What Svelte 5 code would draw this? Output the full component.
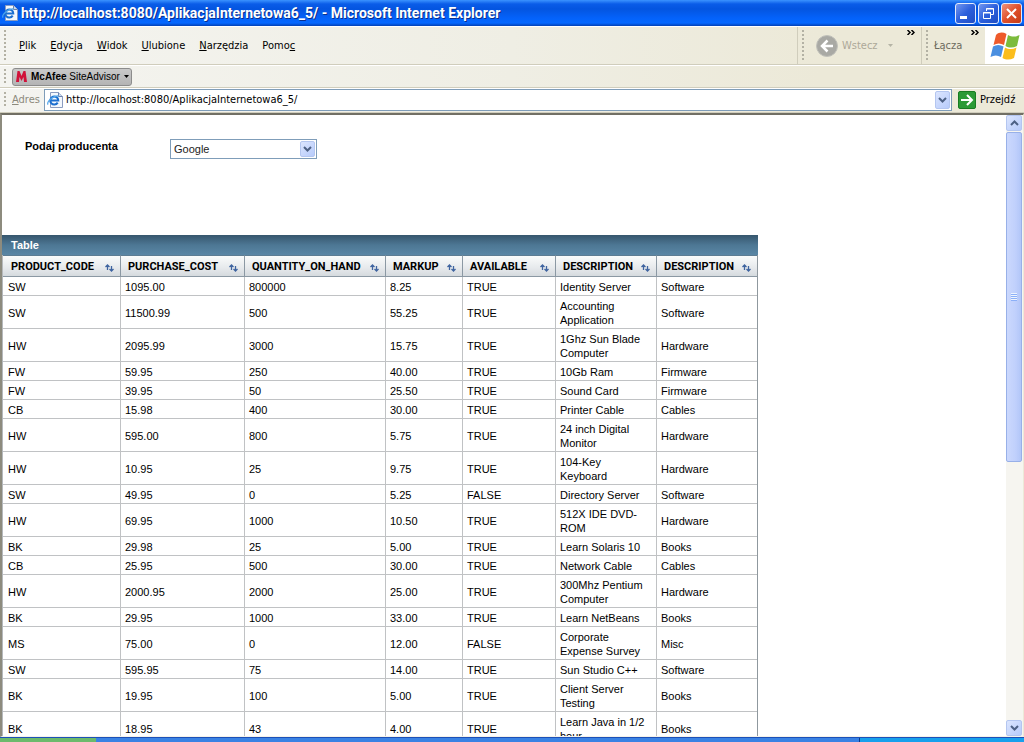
<script>
	const menu = [
		["", "P", "lik"],
		["", "E", "dycja"],
		["", "W", "idok"],
		["", "U", "lubione"],
		["", "N", "arzędzia"],
		["Pomo", "c", ""]
	]

	const columns = [
		{ name: "PRODUCT_CODE", width: 118 },
		{ name: "PURCHASE_COST", width: 124 },
		{ name: "QUANTITY_ON_HAND", width: 141 },
		{ name: "MARKUP", width: 77 },
		{ name: "AVAILABLE", width: 93 },
		{ name: "DESCRIPTION", width: 101 },
		{ name: "DESCRIPTION", width: 100 }
	]

	const rows = [
		["SW", "1095.00", "800000", "8.25", "TRUE", "Identity Server", "Software"],
		["SW", "11500.99", "500", "55.25", "TRUE", "Accounting Application", "Software"],
		["HW", "2095.99", "3000", "15.75", "TRUE", "1Ghz Sun Blade Computer", "Hardware"],
		["FW", "59.95", "250", "40.00", "TRUE", "10Gb Ram", "Firmware"],
		["FW", "39.95", "50", "25.50", "TRUE", "Sound Card", "Firmware"],
		["CB", "15.98", "400", "30.00", "TRUE", "Printer Cable", "Cables"],
		["HW", "595.00", "800", "5.75", "TRUE", "24 inch Digital Monitor", "Hardware"],
		["HW", "10.95", "25", "9.75", "TRUE", "104-Key Keyboard", "Hardware"],
		["SW", "49.95", "0", "5.25", "FALSE", "Directory Server", "Software"],
		["HW", "69.95", "1000", "10.50", "TRUE", "512X IDE DVD-ROM", "Hardware"],
		["BK", "29.98", "25", "5.00", "TRUE", "Learn Solaris 10", "Books"],
		["CB", "25.95", "500", "30.00", "TRUE", "Network Cable", "Cables"],
		["HW", "2000.95", "2000", "25.00", "TRUE", "300Mhz Pentium Computer", "Hardware"],
		["BK", "29.95", "1000", "33.00", "TRUE", "Learn NetBeans", "Books"],
		["MS", "75.00", "0", "12.00", "FALSE", "Corporate Expense Survey", "Misc"],
		["SW", "595.95", "75", "14.00", "TRUE", "Sun Studio C++", "Software"],
		["BK", "19.95", "100", "5.00", "TRUE", "Client Server Testing", "Books"],
		["BK", "18.95", "43", "4.00", "TRUE", "Learn Java in 1/2 hour", "Books"]
	]

	let url = "http://localhost:8080/AplikacjaInternetowa6_5/"
	let producer = "Google"
</script>

{#snippet pageIcon()}
	<svg class="page-icon" viewBox="0 0 16 16" aria-hidden="true">
		<path d="M3.5 .5h8l4 4v11h-12z" fill="#f4f8fd" stroke="#8b9cc0" />
		<path d="M11.5 .5v4h4" fill="#cbd9ee" stroke="#6d82ad" />
		<path d="M10.7 10.6a4 4 0 1 1 .6-2.2H4" fill="none" stroke="#1c6fd0" stroke-width="2" />
		<path d="M1 12.6C-.6 9.5 7 3 11.8 4" fill="none" stroke="#4fa5ea" stroke-width="1.2" />
	</svg>
{/snippet}

{#snippet chevron(down)}
	<svg class="chevron" viewBox="0 0 9 6" aria-hidden="true">
		<path d={down ? "M1 1l3.5 3.5L8 1" : "M1 5l3.5-3.5L8 5"} fill="none" stroke="#4d6185" stroke-width="2" />
	</svg>
{/snippet}

{#snippet more()}
	<svg class="more" viewBox="0 0 8 5" aria-hidden="true">
		<path d="M.5 0L3 2.5.5 5M4.5 0L7 2.5 4.5 5" fill="none" stroke="#000" stroke-width="1.5" />
	</svg>
{/snippet}

<div class="window">
	<header class="titlebar">
		{@render pageIcon()}
		<h1>{url} - Microsoft Internet Explorer</h1>
		<div class="caption-buttons">
			<button aria-label="Minimalizuj">
				<svg viewBox="0 0 19 19"><path d="M4 12h7v3H4z" fill="#fff" /></svg>
			</button>
			<button aria-label="Przywróć">
				<svg viewBox="0 0 19 19">
					<path d="M7.5 7V4.5h7v6H12M7 5h8M4.5 8.5h7v6h-7zM4 9h8" fill="none" stroke="#fff" />
				</svg>
			</button>
			<button class="close" aria-label="Zamknij">
				<svg viewBox="0 0 19 19"><path d="M5 5l9 9M14 5l-9 9" stroke="#fff" stroke-width="2" /></svg>
			</button>
		</div>
	</header>

	<div class="bar menubar">
		<span class="grip"></span>
		<nav>
			{#each menu as [before, key, after]}
				<button>{before}<u>{key}</u>{after}</button>
			{/each}
		</nav>
		<div class="band back">
			<span class="grip"></span>
			<button disabled>
				<svg class="back-icon" viewBox="0 0 22 22" aria-hidden="true">
					<circle cx="11" cy="11" r="10.5" fill="#a9a9a4" stroke="#c0c0ba" />
					<path d="M11.5 5.5L6 11l5.5 5.5M6.5 11H17" fill="none" stroke="#fff" stroke-width="2.5" />
				</svg>
				Wstecz
				<svg class="arrow" viewBox="0 0 5 3" aria-hidden="true"><path d="M0 0h5L2.5 3z" fill="#b5b4a6" /></svg>
			</button>
			{@render more()}
		</div>
		<div class="band links">
			<span class="grip"></span>
			<span>Łącza</span>
			{@render more()}
		</div>
		<div class="flag">
			<svg viewBox="0 0 30 28" aria-hidden="true">
				<path d="M6 3C9 0 13 0 16.5 2L14 13C10.5 11 7 11 3.5 13z" fill="#ee5a2a" />
				<path d="M18 3c4 2 7.5 2 11.5 0L27 14c-4 2-8 2-11.5 0z" fill="#7cbb3c" />
				<path d="M3 14.5c3.5-2 7-2 10.5 0L11 25C7.5 23 4 23 .5 25z" fill="#4a8fe0" />
				<path d="M15 15.5c4 2 7.5 2 11.5 0L24 26c-4 2-8 2-11.5 0z" fill="#fbbd1c" />
			</svg>
		</div>
	</div>

	<div class="bar advisor">
		<span class="grip"></span>
		<button>
			<svg class="mcafee" viewBox="0 0 11 11" aria-hidden="true">
				<path d="M0 11L1.5 0H3.5L5.5 5 7.5 0H9.5L11 11H8L7.5 6 5.5 10 3.5 6 3 11z" fill="#d0123a" />
			</svg>
			<span><b>McAfee</b> SiteAdvisor</span>
			<svg class="arrow" viewBox="0 0 5 3" aria-hidden="true"><path d="M0 0h5L2.5 3z" fill="#000" /></svg>
		</button>
	</div>

	<div class="bar address">
		<span class="grip"></span>
		<label for="address"><u>A</u>dres</label>
		<div class="combo">
			{@render pageIcon()}
			<input id="address" type="text" bind:value={url}>
			<button class="blue" aria-label="Historia adresów">{@render chevron(true)}</button>
		</div>
		<button class="go">
			<svg viewBox="0 0 18 18" aria-hidden="true">
				<rect x=".5" y=".5" width="17" height="17" rx="1.5" fill="#2b9a36" stroke="#187c22" />
				<path d="M3 9h10M9 4l5 5-5 5" fill="none" stroke="#fff" stroke-width="2" />
			</svg>
			Przejdź
		</button>
	</div>

	<div class="view">
		<main>
			<form>
				<label for="producer">Podaj producenta</label>
				<div class="select">
					<select id="producer" bind:value={producer}>
						<option>Google</option>
					</select>
					<span class="blue">{@render chevron(true)}</span>
				</div>
			</form>

			<table>
				<caption>Table</caption>
				<colgroup>
					{#each columns as column}
						<col style="width: {column.width}px">
					{/each}
				</colgroup>
				<thead>
					<tr>
						{#each columns as column}
							<th>
								<div>
									<span>{column.name}</span>
									<button aria-label="Sort">
										<svg viewBox="0 0 9 8" aria-hidden="true">
											<path d="M2.5 6V1M.5 3l2-2 2 2M6.5 2v5M4.5 5l2 2 2-2" fill="none" stroke="#3f64a0" stroke-width="1.3" />
										</svg>
									</button>
								</div>
							</th>
						{/each}
					</tr>
				</thead>
				<tbody>
					{#each rows as row}
						<tr>
							{#each row as cell}
								<td>{cell}</td>
							{/each}
						</tr>
					{/each}
				</tbody>
			</table>
		</main>

		<div class="scrollbar">
			<button class="blue" aria-label="Przewiń w górę">{@render chevron(false)}</button>
			<div class="thumb"><span></span></div>
			<div class="track"></div>
			<button class="blue" aria-label="Przewiń w dół">{@render chevron(true)}</button>
		</div>
	</div>

	<footer class="taskbar">
		<span class="start"></span>
		<span class="tray"></span>
	</footer>
</div>

<style>
	:global(body) {
		margin: 0;
	}
	.window {
		display: flex;
		flex-direction: column;
		height: 100vh;
		overflow: hidden;
		background: #ece9d8;
		font: 11px/14px "DejaVu Sans Condensed", "DejaVu Sans", sans-serif;
		color: #000;
	}
	button {
		display: flex;
		align-items: center;
		padding: 0;
		border: 0;
		background: none;
		font: inherit;
		color: inherit;
	}
	svg {
		flex: none;
		display: block;
	}

	.titlebar {
		display: flex;
		align-items: center;
		gap: 3px;
		height: 26px;
		padding: 0 2px;
		box-sizing: border-box;
		background: linear-gradient(#3b93ff 0, #0a5ce8 4px, #0455e0 9px, #0462fa 18px, #0568ff 23px, #0340b4 26px);
	}
	h1 {
		flex: 1;
		margin: 0;
		font: bold 14px/16px Roboto, sans-serif;
		color: #fff;
		text-shadow: 1px 1px 0 #0b2f8c;
		white-space: nowrap;
	}
	.page-icon {
		width: 16px;
		height: 16px;
	}
	.caption-buttons {
		display: flex;
		gap: 2px;
	}
	.caption-buttons button {
		border: 1px solid #e4ebfb;
		border-radius: 3px;
		background: linear-gradient(135deg, #7397f0, #2c5fdc 50%, #1f4dc4);
	}
	.caption-buttons .close {
		background: linear-gradient(135deg, #f0937c, #e0502c 50%, #c53c15);
	}
	.caption-buttons svg {
		width: 19px;
		height: 19px;
	}

	.bar {
		display: flex;
		align-items: center;
		box-sizing: border-box;
		padding-left: 4px;
		border-top: 1px solid #fff;
		border-bottom: 1px solid #d0cdbc;
		background: linear-gradient(to right, #f4f4f0, #efeee4 50%, #ece9d8 80%);
	}
	.grip {
		flex: none;
		align-self: stretch;
		width: 2px;
		margin: 3px 0;
		background: repeating-linear-gradient(#b3b1a4 0, #b3b1a4 2px, transparent 2px, transparent 4px);
	}
	.menubar {
		height: 39px;
		align-items: stretch;
	}
	nav {
		flex: 1;
		display: flex;
		align-items: center;
		gap: 14px;
		padding-left: 13px;
	}
	.band {
		display: flex;
		align-items: center;
		box-sizing: border-box;
		border-left: 1px solid #d0cdbc;
		padding: 0 6px 0 4px;
	}
	.back {
		width: 124px;
	}
	.back button {
		flex: 1;
		gap: 4px;
		padding-left: 12px;
		color: #aca899;
	}
	.back-icon {
		width: 22px;
		height: 22px;
	}
	.back .arrow {
		margin-left: 6px;
	}
	.links {
		width: 64px;
		color: #6d6b5e;
	}
	.links span:nth-child(2) {
		flex: 1;
		padding-left: 6px;
	}
	.more {
		align-self: flex-start;
		width: 8px;
		height: 5px;
		margin-top: 3px;
	}
	.arrow {
		width: 5px;
		height: 3px;
	}
	.flag {
		display: flex;
		align-items: center;
		justify-content: center;
		width: 39px;
		background: #fff;
	}
	.flag svg {
		width: 30px;
		height: 28px;
	}

	.advisor {
		height: 23px;
	}
	.advisor button {
		gap: 4px;
		height: 18px;
		margin-left: 6px;
		padding: 0 2px 0 3px;
		border: 1px solid #8c8c8c;
		border-radius: 3px;
		background: linear-gradient(#c9c9c9, #b4b4b4);
		font-family: "Liberation Sans", sans-serif;
		font-size: 10px;
	}
	.mcafee {
		width: 11px;
		height: 11px;
	}

	.address {
		height: 25px;
		padding-bottom: 1px;
	}
	.address label {
		width: 38px;
		padding-left: 6px;
		box-sizing: border-box;
		color: #8c8a7c;
	}
	.combo {
		flex: 1;
		display: flex;
		align-items: center;
		box-sizing: border-box;
		height: 22px;
		padding: 1px 1px 1px 2px;
		border: 1px solid #7f9db9;
		background: #fff;
	}
	.combo input {
		flex: 1;
		min-width: 0;
		padding: 0 0 0 3px;
		border: 0;
		outline: 0;
		background: none;
		font: inherit;
	}
	.blue {
		display: flex;
		align-items: center;
		justify-content: center;
		box-sizing: border-box;
		width: 15px;
		border: 1px solid #b4c6f0;
		border-radius: 2px;
		background: linear-gradient(135deg, #dbe5fe, #b7cbfb);
	}
	.chevron {
		width: 9px;
		height: 6px;
	}
	.combo .blue {
		height: 18px;
	}
	.go {
		gap: 4px;
		width: 72px;
		padding-left: 6px;
		box-sizing: border-box;
	}
	.go svg {
		width: 18px;
		height: 18px;
	}

	.view {
		flex: 1;
		display: flex;
		min-height: 0;
		border-top: 2px solid #716f64;
		border-left: 2px solid #8d8b7e;
		border-right: 1px solid #ece9d8;
		border-bottom: 1px solid #f4f2ea;
		background: #fff;
	}
	main {
		flex: 1;
		min-width: 0;
		overflow: hidden;
		font-family: "Liberation Sans", Arial, sans-serif;
	}
	form {
		display: flex;
		align-items: flex-start;
		height: 120px;
		padding: 24px 0 0 23px;
		box-sizing: border-box;
	}
	form label {
		width: 145px;
		font-weight: bold;
	}
	.select {
		display: grid;
		align-items: center;
		width: 147px;
		height: 20px;
	}
	.select > * {
		grid-area: 1 / 1;
	}
	.select .blue {
		justify-self: end;
		height: 16px;
		margin-right: 2px;
		pointer-events: none;
	}
	select {
		appearance: none;
		width: 100%;
		height: 20px;
		padding: 0 20px 0 3px;
		box-sizing: border-box;
		border: 1px solid #7f9db9;
		border-radius: 0;
		background: #fff;
		font: inherit;
		color: #222;
	}

	table {
		width: 756px;
		table-layout: fixed;
		border-collapse: separate;
		border-spacing: 0;
		border-left: 1px solid #b5b8bb;
		border-right: 1px solid #8f989e;
		box-sizing: border-box;
	}
	caption {
		height: 20px;
		padding-left: 9px;
		box-sizing: border-box;
		background: linear-gradient(#36566d, #4d7794 50%, #5a86a5);
		font-weight: bold;
		line-height: 20px;
		text-align: left;
		color: #fff;
	}
	th, td {
		border-right: 1px solid #c0c2c4;
		border-bottom: 1px solid #c0c2c4;
	}
	th:last-child, td:last-child {
		border-right: 0;
	}
	th {
		height: 19px;
		padding: 1px 6px 0 7px;
		border-color: #8b98a3;
		border-top: 1px solid #5d7d93;
		background: linear-gradient(#fafbfb, #e6e9ec 60%, #d5dade);
		font-family: Roboto, sans-serif;
	}
	th:first-child {
		padding-left: 8px;
	}
	th div {
		display: flex;
		align-items: center;
		justify-content: space-between;
	}
	th svg {
		width: 9px;
		height: 8px;
		margin-top: 3px;
	}
	td {
		padding: 3px 6px 1px 4px;
		line-height: 14px;
	}
	td:first-child {
		padding-left: 5px;
	}

	.scrollbar {
		display: flex;
		flex-direction: column;
		width: 17px;
		padding-right: 1px;
		box-sizing: border-box;
		background: #f6f5f0;
	}
	.scrollbar .blue {
		width: 16px;
		height: 16px;
	}
	.thumb {
		flex: 329;
		display: flex;
		align-items: center;
		justify-content: center;
		margin-top: 1px;
		border: 1px solid #98b0e8;
		border-radius: 2px;
		background: linear-gradient(to right, #cbd8fd, #c0d0fc 60%, #b2c6f8);
	}
	.thumb span {
		width: 6px;
		height: 8px;
		background: repeating-linear-gradient(#eef4fe 0, #eef4fe 1px, #8cb0f8 1px, #8cb0f8 2px);
	}
	.track {
		flex: 258;
	}

	.taskbar {
		display: flex;
		justify-content: space-between;
		height: 4px;
		border-top: 1px solid #1c50b8;
		background: #3a82e4;
	}
	.start {
		width: 96px;
		background: #6cba6c;
	}
	.tray {
		width: 16%;
		border-left: 1px solid #0a3a8c;
		background: #18a0ec;
	}
</style>
